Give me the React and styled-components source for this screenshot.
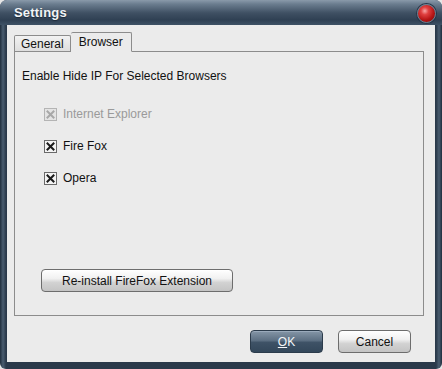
import React, { useState } from "react";
import styled, { createGlobalStyle } from "styled-components";

const GlobalStyle = createGlobalStyle`
  html, body {
    margin: 0;
    padding: 0;
    background: #e6e6e6;
  }
  body {
    font-family: "Liberation Sans", Arial, sans-serif;
    font-size: 12px;
  }
`;

const Window = styled.div`
  width: 442px;
  height: 369px;
  box-sizing: border-box;
  display: flex;
  flex-direction: column;
  background: linear-gradient(90deg, #1f2d3c 0, #4a5d70 3px, #2a394a 6px, #2a394a 436px, #4a5d70 439px, #1f2d3c 442px);
  border-radius: 7px 7px 6px 6px;
  overflow: hidden;
`;

const TitleBar = styled.div`
  height: 25px;
  flex: none;
  display: flex;
  align-items: center;
  justify-content: space-between;
  padding: 0 6px 0 14px;
  background: linear-gradient(#8a9aaa 0, #6b7d8f 4px, #3f5063 13px, #2f4053 20px, #3e5165 25px);
`;

const Title = styled.span`
  color: #f2f4f6;
  font-size: 13px;
  font-weight: bold;
  letter-spacing: 0.2px;
  text-shadow: 0 1px 1px #1d2a38;
  margin-top: -1px;
`;

const CloseButton = styled.button`
  width: 19px;
  height: 19px;
  padding: 0;
  margin-top: 2px;
  border-radius: 50%;
  border: 1px solid #6f7f8f;
  background: radial-gradient(circle at 40% 35%, #f7a7a7 0, #e04040 25%, #b51515 60%, #6e0a0a 100%);
  box-shadow: 0 0 0 1px #27374a;
  cursor: pointer;
`;

const Body = styled.div`
  flex: 1;
  margin: 0 7px 7px 7px;
  background: #ebebeb;
  display: flex;
  flex-direction: column;
  padding: 7px 11px 0 7px;
`;

const Tabs = styled.div`
  display: flex;
  align-items: flex-end;
  height: 19px;
  position: relative;
  z-index: 1;
`;

const Tab = styled.button`
  font-family: inherit;
  font-size: 12px;
  color: #111;
  padding: 0 ${(p) => (p.$active ? "8px" : "6px")};
  height: ${(p) => (p.$active ? "20px" : "16px")};
  margin-bottom: ${(p) => (p.$active ? "-1px" : "0")};
  border: 1px solid #8c8c8c;
  border-bottom: ${(p) => (p.$active ? "1px solid #ebebeb" : "none")};
  border-left: ${(p) => (p.$first ? "1px solid #8c8c8c" : "none")};
  background: ${(p) => (p.$active ? "#ebebeb" : "linear-gradient(#f2f2f2, #dedede)")};
  border-radius: 2px 2px 0 0;
  cursor: pointer;
  line-height: 16px;
`;

const Panel = styled.div`
  height: 265px;
  box-sizing: border-box;
  border: 1px solid #8c8c8c;
  padding: 17px 0 0 7px;
  display: flex;
  flex-direction: column;
`;

const Heading = styled.div`
  color: #111;
  font-size: 12px;
`;

const OptionList = styled.div`
  display: flex;
  flex-direction: column;
  gap: 18px;
  margin: 24px 0 0 22px;
`;

const Option = styled.label`
  display: flex;
  align-items: center;
  gap: 6px;
  height: 14px;
  color: ${(p) => (p.$disabled ? "#9a9a9a" : "#111")};
  font-size: 12px;
  cursor: ${(p) => (p.$disabled ? "default" : "pointer")};
`;

const Box = styled.span`
  width: 11px;
  height: 11px;
  border: 1px solid ${(p) => (p.$disabled ? "#b4b4b4" : "#6a6a6a")};
  background: ${(p) => (p.$disabled ? "#e4e4e4" : "#f4f4f4")};
  display: flex;
  align-items: center;
  justify-content: center;
`;

const Spacer = styled.div`
  flex: 1;
`;

const Button = styled.button`
  font-family: inherit;
  font-size: 12px;
  height: 23px;
  width: ${(p) => p.$width}px;
  border-radius: 4px;
  border: 1px solid ${(p) => (p.$primary ? "#2b3b4b" : "#6d6d6d")};
  color: ${(p) => (p.$primary ? "#f4f6f8" : "#111")};
  background: ${(p) =>
    p.$primary
      ? "linear-gradient(#8596a7 0, #5d7083 45%, #3e5266 55%, #33475a 100%)"
      : "linear-gradient(#ffffff 0, #f1f1f1 40%, #d2d2d2 60%, #c4c4c4 100%)"};
  box-shadow: inset 0 1px 0 ${(p) => (p.$primary ? "#9aaabb" : "#ffffff")};
  cursor: pointer;
  padding: 0;
`;

const ReinstallButton = styled(Button)`
  margin: 0 0 23px 19px;
`;

const Footer = styled.div`
  display: flex;
  justify-content: flex-end;
  gap: 15px;
  padding: 14px 13px 0 0;
`;

const CheckMark = ({ disabled }) => (
  <svg width="9" height="9" viewBox="0 0 9 9">
    <path
      d="M1.5 1.5 L7.5 7.5 M7.5 1.5 L1.5 7.5"
      stroke={disabled ? "#a8a8a8" : "#1a1a1a"}
      strokeWidth="2"
      strokeLinecap="square"
    />
  </svg>
);

const options = [
  { name: "Internet Explorer", disabled: true },
  { name: "Fire Fox" },
  { name: "Opera" },
];

const App = () => {
  const [tab, setTab] = useState("browser");

  return (
    <>
      <GlobalStyle />
      <Window>
        <TitleBar>
          <Title>Settings</Title>
          <CloseButton aria-label="Close" />
        </TitleBar>
        <Body>
          <Tabs>
            <Tab $first $active={tab === "general"} onClick={() => setTab("general")}>
              General
            </Tab>
            <Tab $active={tab === "browser"} onClick={() => setTab("browser")}>
              Browser
            </Tab>
          </Tabs>
          <Panel>
            <Heading>Enable Hide IP For Selected Browsers</Heading>
            <OptionList>
              {options.map((o) => (
                <Option key={o.name} $disabled={o.disabled}>
                  <Box $disabled={o.disabled}>
                    <CheckMark disabled={o.disabled} />
                  </Box>
                  {o.name}
                </Option>
              ))}
            </OptionList>
            <Spacer />
            <ReinstallButton $width={192}>Re-install FireFox Extension</ReinstallButton>
          </Panel>
          <Footer>
            <Button $primary $width={73}>
              <u>O</u>K
            </Button>
            <Button $width={73}>Cancel</Button>
          </Footer>
        </Body>
      </Window>
    </>
  );
};

export default App;
